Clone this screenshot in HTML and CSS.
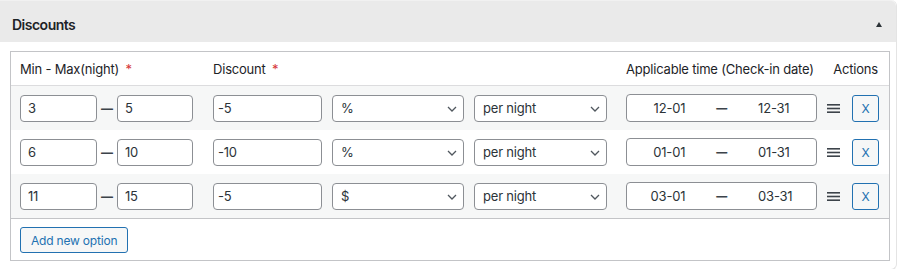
FILE: index.html
```html
<!DOCTYPE html>
<html lang="en">

<head>
    <meta charset="UTF-8">
    <meta name="viewport" content="width=device-width, initial-scale=1.0">
    <title>Discounts</title>
    <link rel="stylesheet" href="styles.css">
</head>

<body>
    <div class="postbox">
        <!-- 面板标题 -->
        <div class="postbox-header">
            <h2 class="postbox-title">Discounts</h2>
            <span class="toggle-arrow"></span>
        </div>

        <div class="inside">
            <div class="discount-table">
                <!-- 表头 -->
                <div class="table-head">
                    <span class="head-range">Min - Max(night) <span class="required">*</span></span>
                    <span class="head-discount">Discount <span class="required">*</span></span>
                    <span class="head-time">Applicable time (Check-in date)</span>
                    <span class="head-actions">Actions</span>
                </div>

                <!-- 规则行 -->
                <div class="table-row">
                    <div class="range">
                        <input class="field field-min" type="text" value="3">
                        <span class="dash">—</span>
                        <input class="field field-max" type="text" value="5">
                    </div>
                    <input class="field field-discount" type="text" value="-5">
                    <div class="select-wrap select-unit">
                        <select class="field-select"><option>%</option><option>$</option></select>
                        <svg class="chevron" width="10" height="6" viewBox="0 0 10 6"><path d="M1 1l4 4 4-4" fill="none" stroke="#50575e" stroke-width="1.3"/></svg>
                    </div>
                    <div class="select-wrap select-per">
                        <select class="field-select"><option>per night</option><option>per stay</option></select>
                        <svg class="chevron" width="10" height="6" viewBox="0 0 10 6"><path d="M1 1l4 4 4-4" fill="none" stroke="#50575e" stroke-width="1.3"/></svg>
                    </div>
                    <div class="date-range">
                        <span>12-01</span>
                        <span class="date-dash">—</span>
                        <span>12-31</span>
                    </div>
                    <svg class="drag-handle" width="13" height="9" viewBox="0 0 13 9"><rect y="0" width="13" height="1.6" fill="#3c434a"/><rect y="3.7" width="13" height="1.6" fill="#3c434a"/><rect y="7.4" width="13" height="1.6" fill="#3c434a"/></svg>
                    <button class="btn-remove" type="button">X</button>
                </div>

                <div class="table-row">
                    <div class="range">
                        <input class="field field-min" type="text" value="6">
                        <span class="dash">—</span>
                        <input class="field field-max" type="text" value="10">
                    </div>
                    <input class="field field-discount" type="text" value="-10">
                    <div class="select-wrap select-unit">
                        <select class="field-select"><option>%</option><option>$</option></select>
                        <svg class="chevron" width="10" height="6" viewBox="0 0 10 6"><path d="M1 1l4 4 4-4" fill="none" stroke="#50575e" stroke-width="1.3"/></svg>
                    </div>
                    <div class="select-wrap select-per">
                        <select class="field-select"><option>per night</option><option>per stay</option></select>
                        <svg class="chevron" width="10" height="6" viewBox="0 0 10 6"><path d="M1 1l4 4 4-4" fill="none" stroke="#50575e" stroke-width="1.3"/></svg>
                    </div>
                    <div class="date-range">
                        <span>01-01</span>
                        <span class="date-dash">—</span>
                        <span>01-31</span>
                    </div>
                    <svg class="drag-handle" width="13" height="9" viewBox="0 0 13 9"><rect y="0" width="13" height="1.6" fill="#3c434a"/><rect y="3.7" width="13" height="1.6" fill="#3c434a"/><rect y="7.4" width="13" height="1.6" fill="#3c434a"/></svg>
                    <button class="btn-remove" type="button">X</button>
                </div>

                <div class="table-row">
                    <div class="range">
                        <input class="field field-min" type="text" value="11">
                        <span class="dash">—</span>
                        <input class="field field-max" type="text" value="15">
                    </div>
                    <input class="field field-discount" type="text" value="-5">
                    <div class="select-wrap select-unit">
                        <select class="field-select"><option>$</option><option>%</option></select>
                        <svg class="chevron" width="10" height="6" viewBox="0 0 10 6"><path d="M1 1l4 4 4-4" fill="none" stroke="#50575e" stroke-width="1.3"/></svg>
                    </div>
                    <div class="select-wrap select-per">
                        <select class="field-select"><option>per night</option><option>per stay</option></select>
                        <svg class="chevron" width="10" height="6" viewBox="0 0 10 6"><path d="M1 1l4 4 4-4" fill="none" stroke="#50575e" stroke-width="1.3"/></svg>
                    </div>
                    <div class="date-range">
                        <span>03-01</span>
                        <span class="date-dash">—</span>
                        <span>03-31</span>
                    </div>
                    <svg class="drag-handle" width="13" height="9" viewBox="0 0 13 9"><rect y="0" width="13" height="1.6" fill="#3c434a"/><rect y="3.7" width="13" height="1.6" fill="#3c434a"/><rect y="7.4" width="13" height="1.6" fill="#3c434a"/></svg>
                    <button class="btn-remove" type="button">X</button>
                </div>

                <!-- 底部按钮 -->
                <div class="table-foot">
                    <button class="btn-add" type="button">Add new option</button>
                </div>
            </div>
        </div>
    </div>
</body>

</html>
```

FILE: styles.css
```css
/* 基础样式 */
body {
    margin: 0;
    background: #ffffff;
    font-family: Inter, 'Noto Sans', sans-serif;
    font-size: 13px;
    letter-spacing: -0.2px;
    color: #1d2327;
}

/* 面板 */
.postbox {
    width: 896px;
    border: 1px solid #e4e4e4;
    border-left: none;
    border-top: none;
    border-radius: 0 6px 6px 0;
    background: #ffffff;
}

.postbox-header {
    height: 42px;
    background: #eaeaea;
    border-top: 1px solid #f1f1f1;
    border-radius: 0 6px 0 0;
    box-sizing: border-box;
    display: flex;
    align-items: center;
    justify-content: space-between;
    padding: 6px 14px 0 12px;
}

.postbox-title {
    margin: 0;
    font-size: 14px;
    font-weight: 600;
    letter-spacing: -0.5px;
    color: #1d2327;
}

/* 折叠箭头 */
.toggle-arrow {
    width: 0;
    height: 0;
    border-left: 3.5px solid transparent;
    border-right: 3.5px solid transparent;
    border-bottom: 5px solid #2c3338;
}

.inside {
    padding: 9px 0 8px 10px;
}

/* 表格 */
.discount-table {
    width: 880px;
    box-sizing: border-box;
    border: 1px solid #c3c4c7;
}

.table-head {
    height: 34px;
    box-sizing: border-box;
    border-bottom: 1px solid #dcdcde;
    display: flex;
    align-items: center;
    padding: 0 9px;
    color: #1d2327;
}

.head-range {
    width: 193px;
}

.head-discount {
    width: 413px;
}

.head-time {
    flex: 1;
}

.head-actions {
    padding-right: 2px;
}

.required {
    color: #d63638;
    margin-left: 3px;
}

.table-row {
    height: 44px;
    display: flex;
    align-items: center;
    padding: 0 9px;
}

.table-row:nth-child(even) {
    background: #f6f7f7;
}

/* 输入框 */
.range {
    width: 173px;
    display: flex;
    align-items: center;
}

.field {
    height: 27px;
    box-sizing: border-box;
    border: 1px solid #8c8f94;
    border-radius: 4px;
    background: #ffffff;
    font-family: inherit;
    font-size: 13px;
    letter-spacing: inherit;
    color: #2c3338;
    padding: 0 7px;
    margin: 0;
}

.field-min {
    width: 77px;
}

.field-max {
    width: 76px;
}

.dash {
    width: 20px;
    text-align: center;
    font-size: 12px;
    font-weight: 800;
    color: #3c434a;
}

.field-discount {
    width: 109px;
    margin-left: 20px;
    padding-left: 4px;
}

/* 下拉框 */
.select-wrap {
    position: relative;
    margin-left: 10px;
}

.select-unit {
    width: 132px;
}

.select-per {
    width: 133px;
}

.field-select {
    width: 100%;
    height: 27px;
    box-sizing: border-box;
    border: 1px solid #8c8f94;
    border-radius: 4px;
    background: #ffffff;
    font-family: inherit;
    font-size: 13px;
    letter-spacing: inherit;
    color: #2c3338;
    padding: 0 8px;
    appearance: none;
    -webkit-appearance: none;
    display: block;
}

.chevron {
    position: absolute;
    right: 7px;
    top: 11px;
    pointer-events: none;
}

/* 日期范围 */
.date-range {
    width: 191px;
    height: 28px;
    margin-left: 19px;
    box-sizing: border-box;
    border: 1px solid #8c8f94;
    border-radius: 4px;
    display: flex;
    align-items: center;
    justify-content: center;
    gap: 31px;
    color: #2c3338;
    background: #ffffff;
}

.date-dash {
    font-weight: 800;
    color: #3c434a;
    font-size: 11px;
}

.drag-handle {
    margin-left: 10px;
    flex-shrink: 0;
}

/* 按钮 */
.btn-remove {
    width: 27px;
    height: 27px;
    margin-left: 12px;
    padding: 0;
    border: 1px solid #2271b1;
    border-radius: 3px;
    background: #f6f7f7;
    color: #2271b1;
    font-family: inherit;
    font-size: 12px;
}

.table-foot {
    border-top: 1px solid #c3c4c7;
    padding: 8px 9px 7px;
}

.btn-add {
    height: 26px;
    padding: 0 10px;
    border: 1px solid #2271b1;
    border-radius: 3px;
    background: #f6f7f7;
    color: #2271b1;
    font-family: inherit;
    font-size: 12px;
    letter-spacing: inherit;
    display: block;
}
```
